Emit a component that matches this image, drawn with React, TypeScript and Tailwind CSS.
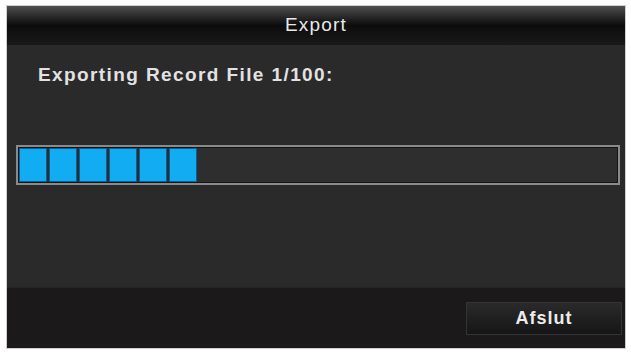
const App = () => {
  const segments = 6;

  return (
    <div className="w-[631px] h-[354px] bg-white p-[5px] pl-[6px] pr-[5px] font-['Liberation_Sans',Arial,sans-serif]">
      <div className="flex flex-col w-full h-full bg-[#2a2a2a] border border-[#cfcfcf]">
        {/* Header */}
        <div className="flex items-center justify-center h-[39px] bg-gradient-to-b from-[#505050] via-[#0c0c0c] to-[#1a1a1a] text-[#e8e8e8] text-[19px] tracking-[1.2px]">
          Export
        </div>

        {/* Body */}
        <div className="flex flex-col flex-1 pl-[9px] pr-[5px]">
          <p className="mt-[16px] ml-[22px] text-[19px] font-bold text-[#e2e2e2] tracking-[1.4px]">
            Exporting Record File 1/100:
          </p>
          <div className="mt-[55px] h-[40px] border-2 border-[#8a8a8a] bg-[#2e2e2e] p-[1px] flex gap-[2px] shadow-[inset_0_0_0_1px_#151515]">
            {Array.from({ length: segments }).map((_, i) => (
              <div
                key={i}
                className="w-[28px] h-full bg-[#12acf2] border border-[#0a5f9a]"
              ></div>
            ))}
          </div>
        </div>

        {/* Footer */}
        <div className="flex items-center justify-end h-[61px] bg-[#1b1919] pr-[3px] border-t border-[#262424]">
          <button className="w-[156px] h-[33px] bg-gradient-to-b from-[#2a2a2a] to-[#161616] border border-[#343434] text-[#ececec] text-[18px] font-bold tracking-[1px]">
            Afslut
          </button>
        </div>
      </div>
    </div>
  );
};

export default App;
